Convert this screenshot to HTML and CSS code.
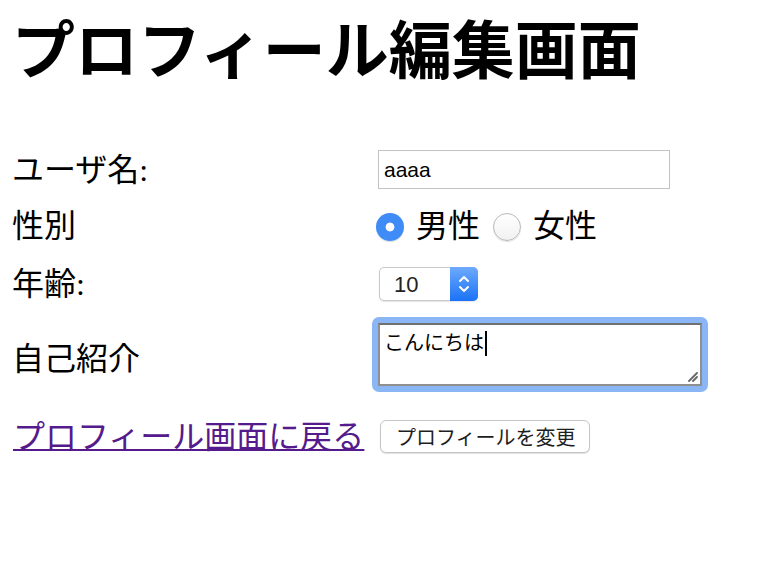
FILE: index.html
```html
<!DOCTYPE html>
<html lang="ja">
<head>
<meta charset="utf-8">
<title>プロフィール編集画面</title>
<link rel="stylesheet" href="styles.css">
</head>
<body>
<h1 class="title">プロフィール編集画面</h1>
<form class="form">
  <label class="label" for="name">ユーザ名:</label>
  <div class="field">
    <input id="name" class="text-input" type="text" value="aaaa">
  </div>

  <span class="label">性別</span>
  <div class="field radios">
    <input class="radio" type="radio" name="gender" id="male" checked>
    <label class="radio-text" for="male">男性</label>
    <input class="radio" type="radio" name="gender" id="female">
    <label class="radio-text" for="female">女性</label>
  </div>

  <label class="label" for="age">年齢:</label>
  <div class="field">
    <div class="select">
      <select id="age" class="select-input">
        <option>10</option>
      </select>
      <span class="select-arrows">
        <svg width="14" height="22" viewBox="0 0 14 22"><path d="M3 8 L7 4 L11 8" fill="none" stroke="#fff" stroke-width="2" stroke-linecap="round" stroke-linejoin="round"/><path d="M3 14 L7 18 L11 14" fill="none" stroke="#fff" stroke-width="2" stroke-linecap="round" stroke-linejoin="round"/></svg>
      </span>
    </div>
  </div>

  <span class="label label-intro">自己紹介</span>
  <div class="field">
    <div class="focus-ring">
      <div class="textarea" role="textbox" aria-multiline="true">こんにちは<span class="caret"></span>
        <svg class="grip" width="12" height="12" viewBox="0 0 12 12"><path d="M11 3 L3 11 M11 7 L7 11" stroke="#666666" stroke-width="1.8" stroke-linecap="round"/></svg>
      </div>
    </div>
  </div>

  <div class="label"><a class="back-link" href="#">プロフィール画面に戻る</a></div>
  <div class="field">
    <button class="submit" type="button">プロフィールを変更</button>
  </div>
</form>
</body>
</html>
```

FILE: styles.css
```css
html, body {
  margin: 0;
  padding: 0;
  background: #ffffff;
}

body {
  font-family: "Liberation Serif", "Noto Sans CJK JP", serif;
  color: #000000;
}

.title {
  margin: 0 0 0 12px;
  font-family: "Noto Sans CJK JP", sans-serif;
  font-weight: 700;
  font-size: 63px;
  line-height: normal;
  letter-spacing: 0;
}

.form {
  display: grid;
  grid-template-columns: 366px auto;
  grid-template-rows: 39px 74px 42px 108px 47px;
  align-items: center;
  margin: 59px 0 0 12px;
}

.label {
  font-size: 32px;
  line-height: 1;
  font-weight: 400;
}

.field {
  display: flex;
  align-items: center;
}

.text-input {
  box-sizing: border-box;
  width: 292px;
  height: 39px;
  margin: 0;
  padding: 0 5px;
  border: 1px solid #c2c2c2;
  border-radius: 0;
  font-family: "Liberation Sans", "Noto Sans CJK JP", sans-serif;
  font-size: 21px;
  color: #000;
  background: #fff;
  outline: none;
}

.radios {
  margin-left: -2px;
}

.radio {
  appearance: none;
  -webkit-appearance: none;
  box-sizing: border-box;
  width: 28px;
  height: 28px;
  margin: 2px 0 0 0;
  border-radius: 50%;
  border: 1px solid #b9b9b9;
  background: linear-gradient(#ffffff, #f1f1f1);
  box-shadow: 0 1px 1px rgba(0, 0, 0, 0.12);
}

.radio:checked {
  border: none;
  background: radial-gradient(circle, #ffffff 0, #ffffff 4px, #3f8cf6 4.8px);
  box-shadow: 0 1px 1px rgba(0, 0, 0, 0.15);
}

.radio-text {
  font-size: 32px;
  line-height: 1;
  margin: 0 13px 0 12px;
}

.select {
  position: relative;
  width: 99px;
  height: 34px;
  margin-left: 1px;
}

.select-input {
  appearance: none;
  -webkit-appearance: none;
  box-sizing: border-box;
  width: 99px;
  height: 34px;
  margin: 0;
  padding: 0 0 0 14px;
  border: 1px solid #c9c9c9;
  border-radius: 5px;
  background: #ffffff;
  box-shadow: 0 1px 1px rgba(0, 0, 0, 0.1);
  font-family: "Liberation Sans", "Noto Sans CJK JP", sans-serif;
  font-size: 22px;
  color: #222;
}

.select-arrows {
  position: absolute;
  top: 0;
  right: 0;
  width: 28px;
  height: 34px;
  border-radius: 0 5px 5px 0;
  background: linear-gradient(#6eaafc, #1a72f6);
  display: flex;
  align-items: center;
  justify-content: center;
}

.focus-ring {
  margin: 0 0 10px -6px;
  padding: 6px;
  border-radius: 7px;
  background: #8ab6f6;
}

.textarea {
  position: relative;
  box-sizing: border-box;
  width: 324px;
  height: 63px;
  padding: 4px 4px;
  border: 2px solid #8f8f8f;
  border-top-color: #707070;
  background: #ffffff;
  font-family: "Noto Sans CJK JP", sans-serif;
  font-size: 20px;
  line-height: 26px;
  color: #000;
}

.caret {
  display: inline-block;
  width: 2px;
  height: 25px;
  margin-left: 1px;
  vertical-align: -6px;
  background: #000;
}

.grip {
  position: absolute;
  right: 2px;
  bottom: 2px;
}

.back-link {
  color: #551a8b;
  text-decoration: underline;
  text-decoration-thickness: 2px;
  text-underline-offset: 1px;
  margin-left: 1px;
}

.submit {
  box-sizing: border-box;
  width: 210px;
  height: 33px;
  margin: 0 0 0 2px;
  padding: 0 0 0 15px;
  border: 1px solid #c6c6c6;
  border-radius: 6px;
  background: #ffffff;
  box-shadow: 0 1px 1px rgba(0, 0, 0, 0.12);
  font-family: "Noto Sans CJK JP", sans-serif;
  font-size: 20px;
  line-height: 1;
  color: #1e1e1e;
  text-align: left;
  white-space: nowrap;
}
```
